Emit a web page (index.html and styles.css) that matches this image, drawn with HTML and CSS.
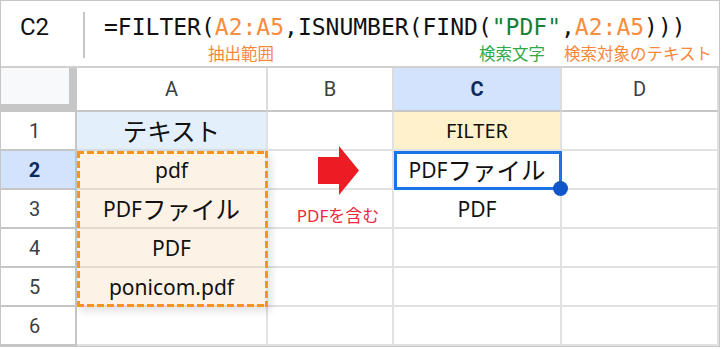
FILE: index.html
```html
<!DOCTYPE html>
<html lang="ja">

<head>
    <meta charset="UTF-8">
    <meta name="viewport" content="width=device-width, initial-scale=1.0">
    <title>FILTER + ISNUMBER + FIND</title>
    <link rel="stylesheet" href="styles.css">
</head>

<body>
    <div class="app">
        <div class="formula-bar">
            <div class="name-box">C2</div>
            <div class="divider"></div>
            <div class="formula">
                <div class="expr">=FILTER(<span class="ref">A2:A5</span>,ISNUMBER(FIND(<span class="str">"PDF"</span>,<span class="ref">A2:A5</span>)))</div>
                <div class="notes">
                    <span class="note note-range">抽出範囲</span>
                    <span class="note note-key">検索文字</span>
                    <span class="note note-target">検索対象のテキスト</span>
                </div>
            </div>
        </div>

        <div class="sheet">
            <div class="cells">
                <div class="corner"></div>
                <div class="col-head">A</div>
                <div class="col-head">B</div>
                <div class="col-head active">C</div>
                <div class="col-head">D</div>

                <div class="row-head">1</div>
                <div class="cell title"><span class="jp">テキスト</span></div>
                <div class="cell"></div>
                <div class="cell result-head">FILTER</div>
                <div class="cell"></div>

                <div class="row-head active">2</div>
                <div class="cell src">pdf</div>
                <div class="cell"></div>
                <div class="cell">PDF<span class="jp">ファイル</span></div>
                <div class="cell"></div>

                <div class="row-head">3</div>
                <div class="cell src">PDF<span class="jp">ファイル</span></div>
                <div class="cell"></div>
                <div class="cell">PDF</div>
                <div class="cell"></div>

                <div class="row-head">4</div>
                <div class="cell src">PDF</div>
                <div class="cell"></div>
                <div class="cell"></div>
                <div class="cell"></div>

                <div class="row-head">5</div>
                <div class="cell src">ponicom.pdf</div>
                <div class="cell"></div>
                <div class="cell"></div>
                <div class="cell"></div>

                <div class="row-head">6</div>
                <div class="cell"></div>
                <div class="cell"></div>
                <div class="cell"></div>
                <div class="cell"></div>
            </div>

            <div class="marks">
                <div class="range"></div>
                <div class="flow">
                    <svg class="arrow" width="41" height="49" viewBox="0 0 41 49">
                        <polygon points="0,11 21,11 21,0 41,24.5 21,49 21,38 0,38" fill="#ec1c24" />
                    </svg>
                    <span class="flow-label">PDF<span class="flow-jp">を含む</span></span>
                </div>
                <div class="selection"><span class="handle"></span></div>
            </div>
        </div>
    </div>
</body>

</html>
```

FILE: styles.css
```css
body {
    margin: 0;
    background: #fff;
    font-family: Roboto, "Noto Sans", sans-serif;
}

.app {
    width: 720px;
    height: 347px;
    box-sizing: border-box;
    border: 1px solid #c6c6c6;
    overflow: hidden;
}

/* formula bar */
.formula-bar {
    display: flex;
    height: 67px;
    box-sizing: border-box;
    border-bottom: 2px solid #d0d0d0;
}

.name-box {
    width: 67px;
    padding-top: 12px;
    font-size: 24px;
    line-height: 28px;
    text-align: center;
    color: #111;
}

.divider {
    width: 2px;
    height: 46px;
    margin: 11px 0 0 15px;
    background: #c7c7c7;
}

.formula {
    margin-left: 19px;
    padding-top: 12px;
}

.expr {
    font-family: "DejaVu Sans Mono", monospace;
    font-size: 23px;
    line-height: 28px;
    color: #111;
    white-space: nowrap;
}

.expr .ref {
    color: #f58d3f;
}

.expr .str {
    color: #188038;
}

.notes {
    display: flex;
    margin-top: 2px;
    white-space: nowrap;
    font-family: "Noto Sans CJK JP", sans-serif;
    font-size: 16.5px;
    line-height: 20px;
}

.note-range {
    margin-left: 104px;
    color: #f7883c;
}

.note-key {
    margin-left: 205px;
    color: #31a94a;
}

.note-target {
    margin-left: 19px;
    color: #f7883c;
}

/* sheet */
.sheet {
    display: grid;
}

.cells,
.marks {
    grid-area: 1 / 1;
    display: grid;
    grid-template-columns: 76px 191px 126px 168px 1fr;
    grid-template-rows: 44px repeat(6, 39px);
}

.cells > div {
    box-sizing: border-box;
    display: flex;
    align-items: center;
    justify-content: center;
}

.corner {
    background: #f8f9fa;
    border-right: 8px solid #c6c6c6;
    border-bottom: 8px solid #c6c6c6;
}

.col-head {
    font-size: 20px;
    color: #3c4043;
    border-right: 2px solid #dcdcdc;
    border-bottom: 2px solid #c6c6c6;
}

.row-head {
    padding-right: 7px;
    font-size: 20px;
    color: #3c4043;
    border-right: 2px solid #c6c6c6;
    border-bottom: 2px solid #c6c6c6;
}

.col-head.active,
.row-head.active {
    background: #d3e3fd;
    color: #0b2a5c;
    font-weight: 700;
}

.cell {
    font-family: "Noto Sans", "Noto Sans CJK JP", sans-serif;
    font-size: 21px;
    color: #111;
    border-right: 2px solid #e1e1e1;
    border-bottom: 2px solid #e1e1e1;
    white-space: nowrap;
}

.cell .jp {
    font-family: "Noto Sans CJK JP", sans-serif;
    font-size: 24.5px;
}

.cell.title {
    background: #e3effb;
    border-bottom-color: #d7dde4;
}

.cell.src {
    background: #fcf3e6;
    border-bottom-color: #e6dccd;
}

.cell.result-head {
    background: #fff1cc;
    font-size: 20px;
}

/* overlays */
.marks {
    pointer-events: none;
}

.range {
    grid-column: 2;
    grid-row: 3 / 7;
    box-shadow: 3px 4px 8px rgba(0, 0, 0, 0.12);
    background:
        repeating-linear-gradient(90deg, #f7941d 0 7px, transparent 7px 10px) top / 100% 3px no-repeat,
        repeating-linear-gradient(90deg, #f7941d 0 7px, transparent 7px 10px) bottom / 100% 3px no-repeat,
        repeating-linear-gradient(180deg, #f7941d 0 7px, transparent 7px 10px) left / 3px 100% no-repeat,
        repeating-linear-gradient(180deg, #f7941d 0 7px, transparent 7px 10px) right / 3px 100% no-repeat;
}

.flow {
    grid-column: 3;
    grid-row: 3 / 5;
    display: flex;
    flex-direction: column;
    align-items: center;
    padding-left: 14px;
}

.arrow {
    display: block;
    margin-top: -5px;
}

.flow-label {
    margin-top: 10px;
    font-family: "Noto Sans", "Noto Sans CJK JP", sans-serif;
    font-size: 17px;
    line-height: 20px;
    color: #ee2a3c;
    white-space: nowrap;
}

.flow-jp {
    font-family: "Noto Sans CJK JP", sans-serif;
}

.selection {
    grid-column: 4;
    grid-row: 3;
    position: relative;
    border: 3px solid #1a73e8;
}

.handle {
    position: absolute;
    right: -9px;
    bottom: -9px;
    width: 15px;
    height: 15px;
    border-radius: 50%;
    background: #1155cc;
}
```
